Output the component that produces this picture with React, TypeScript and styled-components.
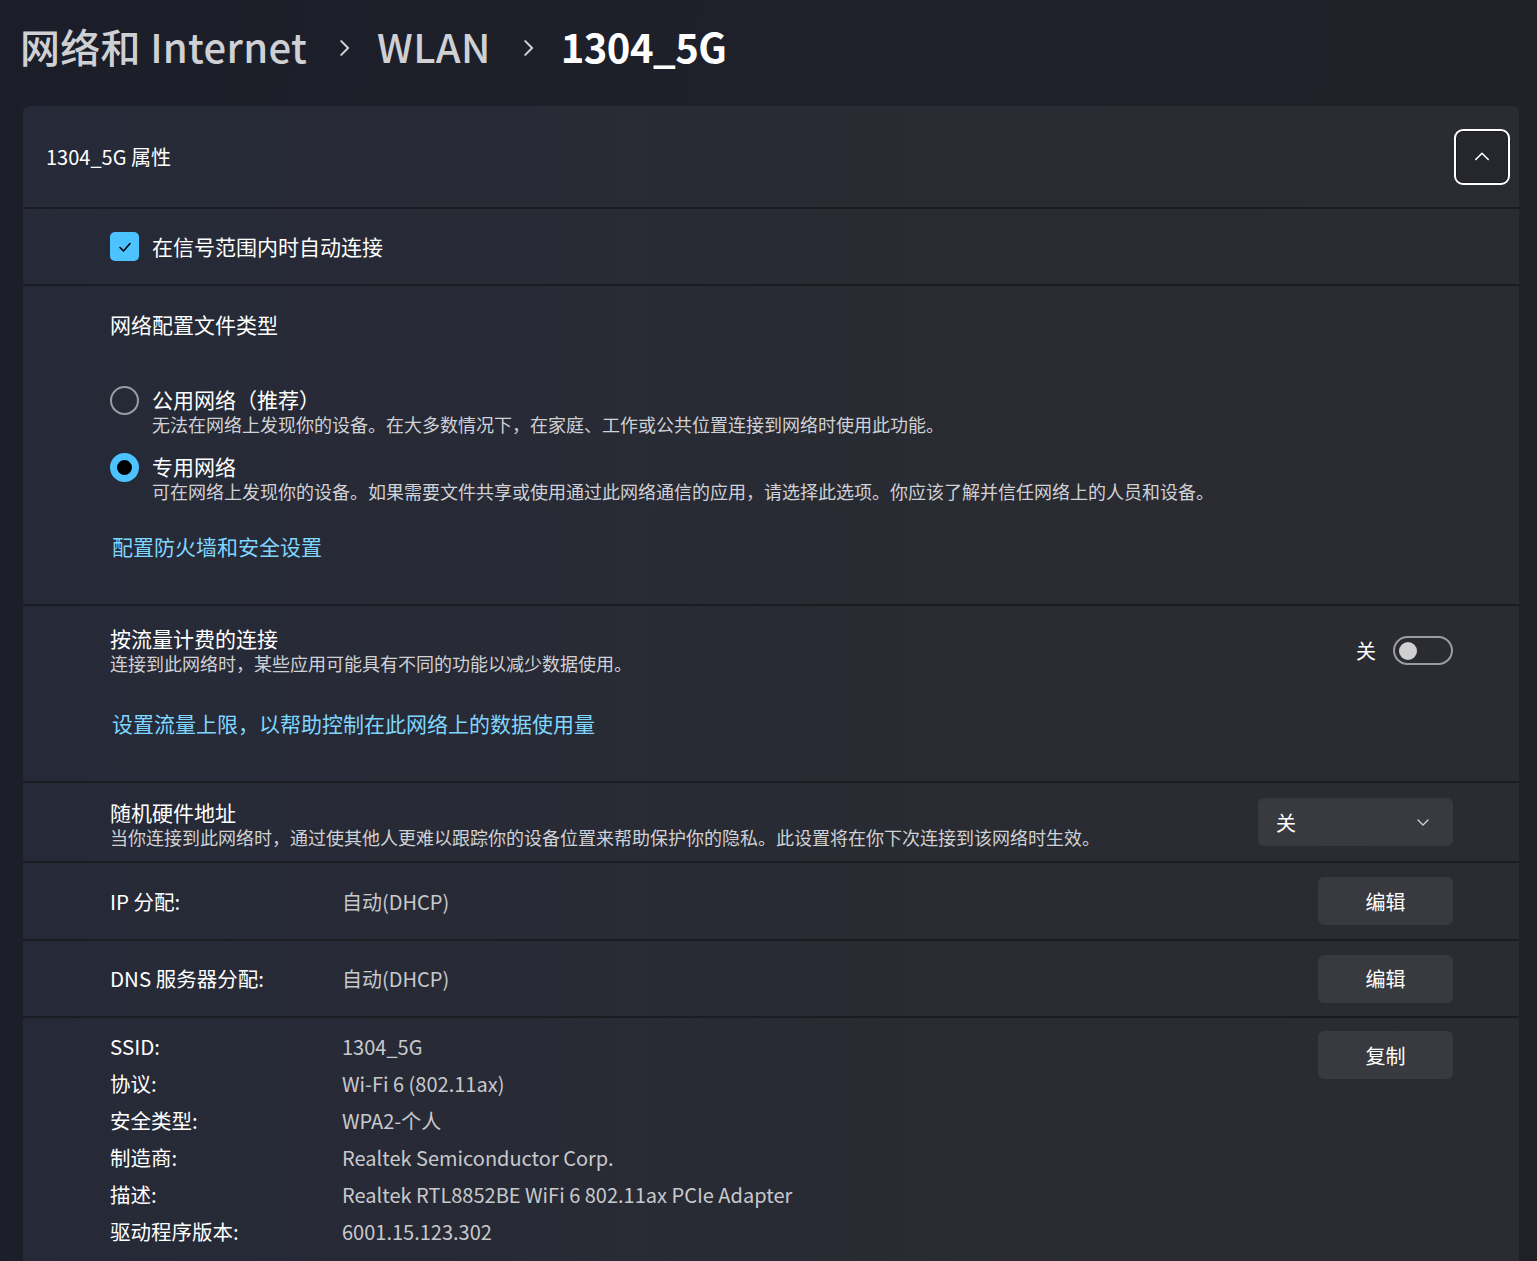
import styled, { createGlobalStyle } from "styled-components";
import { useState } from "react";

const GlobalStyle = createGlobalStyle`
  body {
    margin: 0;
    background: #1c1f28;
    font-family: "Segoe UI", "Noto Sans CJK SC", "Noto Sans", sans-serif;
    color: #ffffff;
  }
`;

const Page = styled.div`
  height: 1261px;
  overflow: hidden;
  background: linear-gradient(100deg, #1b1e28 0%, #1f222b 60%, #202127 100%);
  padding: 0 18px 0 23px;
`;

const Breadcrumb = styled.div`
  display: flex;
  align-items: center;
  height: 106px;
  margin-left: -3px;
  padding-bottom: 14px;
  box-sizing: border-box;
  font-size: 40px;
  font-weight: 600;
`;

const Crumb = styled.span<{ $current?: boolean }>`
  color: ${(p) => (p.$current ? "#ffffff" : "#cfd0d4")};
  font-weight: ${(p) => (p.$current ? 600 : 500)};
  letter-spacing: ${(p) => (p.$current ? "-0.5px" : "0.3px")};
`;

const Chevron = styled.span`
  display: inline-flex;
  margin: 4px 22px 0 26px;
  color: #cfd0d4;
`;

const Card = styled.div`
  display: flex;
  flex-direction: column;
  gap: 2px;
  border-radius: 6px 6px 0 0;
  overflow: hidden;
  background: #1a1c22;
`;

const Section = styled.div<{ $h?: number }>`
  position: relative;
  background: linear-gradient(90deg, #262a38 0%, #292b33 55%, #2b2c31 100%);
  padding: 0 66px 0 87px;
  ${(p) => (p.$h ? `height: ${p.$h}px;` : "")}
  box-sizing: border-box;
`;

const Header = styled(Section)`
  display: flex;
  align-items: center;
  justify-content: space-between;
  padding: 0 9px 0 23px;
  font-size: 20px;
`;

const ExpandButton = styled.button`
  width: 56px;
  height: 56px;
  border: 2px solid #ffffff;
  border-radius: 9px;
  background: #25272d;
  box-shadow: inset 0 0 0 1px #1a1b20;
  display: flex;
  align-items: center;
  justify-content: center;
  padding: 0;
`;

const CenterRow = styled(Section)`
  display: flex;
  align-items: center;
  justify-content: space-between;
`;

const Check = styled.span`
  width: 29px;
  height: 29px;
  border-radius: 5px;
  background: #4cc2ff;
  display: inline-flex;
  align-items: center;
  justify-content: center;
  margin-right: 13px;
`;

const Label = styled.span`
  font-size: 21px;
  line-height: 25px;
  color: #ffffff;
`;

const GroupTitle = styled.div`
  font-size: 21px;
  line-height: 25px;
  padding-top: 26px;
`;

const RadioList = styled.div`
  display: flex;
  flex-direction: column;
  gap: 18px;
  margin-top: 50px;
`;

const RadioItem = styled.div`
  display: flex;
  align-items: flex-start;
`;

const Radio = styled.span<{ $on?: boolean }>`
  width: 29px;
  height: 29px;
  border-radius: 50%;
  box-sizing: border-box;
  flex: none;
  margin-right: 13px;
  margin-top: -1px;
  ${(p) =>
    p.$on
      ? "border: 7px solid #4cc2ff; background: #000;"
      : "border: 2px solid #9b9ca1; background: transparent;"}
`;

const TextBlock = styled.div`
  display: flex;
  flex-direction: column;
`;

const Desc = styled.span`
  font-size: 18px;
  line-height: 24px;
  color: #d0d1d5;
`;

const Link = styled.a<{ $gap: number }>`
  display: block;
  font-size: 21px;
  line-height: 25px;
  color: #7fd6ff;
  margin-left: 2px;
  margin-top: ${(p) => p.$gap}px;
`;

const SplitRow = styled.div`
  display: flex;
  align-items: center;
  justify-content: space-between;
`;

const Switch = styled.div`
  display: flex;
  align-items: center;
  gap: 17px;
  font-size: 20px;
`;

const Track = styled.span`
  width: 60px;
  height: 29px;
  border-radius: 15px;
  border: 2px solid #9c9da2;
  box-sizing: border-box;
  display: flex;
  align-items: center;
  padding-left: 4px;
`;

const Knob = styled.span`
  width: 18px;
  height: 18px;
  border-radius: 50%;
  background: #d0d0d2;
`;

const Dropdown = styled.div`
  width: 195px;
  height: 48px;
  border-radius: 6px;
  background: #393a40;
  box-sizing: border-box;
  padding: 0 22px 0 18px;
  display: flex;
  align-items: center;
  justify-content: space-between;
  font-size: 20px;
`;

const Key = styled.span`
  width: 232px;
  font-size: 20.5px;
  line-height: 37px;
  color: #ffffff;
  flex: none;
`;

const Value = styled.span`
  font-size: 20px;
  line-height: 37px;
  color: #c8c9cd;
`;

const Pair = styled.div`
  display: flex;
  align-items: center;
`;

const ActionButton = styled.button<{ $top?: number }>`
  width: 135px;
  height: 48px;
  border: none;
  border-radius: 6px;
  background: #393a40;
  color: #ffffff;
  font-family: inherit;
  font-size: 20px;
  margin-top: ${(p) => p.$top ?? 0}px;
`;

const MeteredSection = styled(Section)`
  padding-top: 20px;
`;

const Details = styled(Section)`
  display: flex;
  justify-content: space-between;
  align-items: flex-start;
  padding-top: 10px;
  height: 280px;
`;

const DetailList = styled.div`
  display: flex;
  flex-direction: column;
`;

const ChevronIcon = ({ dir, size, color, sw }: { dir: "up" | "down" | "right"; size: number; color: string; sw: number }) => {
  const d = dir === "up" ? "M3 10 L8 5 L13 10" : dir === "down" ? "M3 6 L8 11 L13 6" : "M6 3 L11 8 L6 13";
  return (
    <svg width={size} height={size} viewBox="0 0 16 16" fill="none">
      <path d={d} stroke={color} strokeWidth={sw} strokeLinecap="round" strokeLinejoin="round" />
    </svg>
  );
};

const details: [string, string][] = [
  ["SSID:", "1304_5G"],
  ["协议:", "Wi-Fi 6 (802.11ax)"],
  ["安全类型:", "WPA2-个人"],
  ["制造商:", "Realtek Semiconductor Corp."],
  ["描述:", "Realtek RTL8852BE WiFi 6 802.11ax PCIe Adapter"],
  ["驱动程序版本:", "6001.15.123.302"],
];

const App = () => {
  const [auto, setAuto] = useState(true);
  const [profile, setProfile] = useState("private");

  return (
    <>
      <GlobalStyle />
      <Page>
        <Breadcrumb>
          <Crumb>网络和 Internet</Crumb>
          <Chevron>
            <ChevronIcon dir="right" size={22} color="#cfd0d4" sw={1.5} />
          </Chevron>
          <Crumb>WLAN</Crumb>
          <Chevron>
            <ChevronIcon dir="right" size={22} color="#cfd0d4" sw={1.5} />
          </Chevron>
          <Crumb $current>1304_5G</Crumb>
        </Breadcrumb>

        <Card>
          <Header $h={101}>
            <span>1304_5G 属性</span>
            <ExpandButton>
              <ChevronIcon dir="up" size={20} color="#ffffff" sw={1.3} />
            </ExpandButton>
          </Header>

          <CenterRow $h={75} onClick={() => setAuto(!auto)}>
            <Pair>
              <Check>
                {auto && (
                  <svg width="16" height="16" viewBox="0 0 16 16" fill="none">
                    <path d="M3 8.5 L6.5 12 L13 4.5" stroke="#000" strokeWidth="1.6" strokeLinecap="round" strokeLinejoin="round" />
                  </svg>
                )}
              </Check>
              <Label>在信号范围内时自动连接</Label>
            </Pair>
          </CenterRow>

          <Section $h={318}>
            <GroupTitle>网络配置文件类型</GroupTitle>
            <RadioList>
              <RadioItem onClick={() => setProfile("public")}>
                <Radio $on={profile === "public"} />
                <TextBlock>
                  <Label>公用网络（推荐）</Label>
                  <Desc>无法在网络上发现你的设备。在大多数情况下，在家庭、工作或公共位置连接到网络时使用此功能。</Desc>
                </TextBlock>
              </RadioItem>
              <RadioItem onClick={() => setProfile("private")}>
                <Radio $on={profile === "private"} />
                <TextBlock>
                  <Label>专用网络</Label>
                  <Desc>可在网络上发现你的设备。如果需要文件共享或使用通过此网络通信的应用，请选择此选项。你应该了解并信任网络上的人员和设备。</Desc>
                </TextBlock>
              </RadioItem>
            </RadioList>
            <Link $gap={31}>配置防火墙和安全设置</Link>
          </Section>

          <MeteredSection $h={175}>
            <SplitRow>
              <TextBlock>
                <Label>按流量计费的连接</Label>
                <Desc>连接到此网络时，某些应用可能具有不同的功能以减少数据使用。</Desc>
              </TextBlock>
              <Switch>
                <span>关</span>
                <Track>
                  <Knob />
                </Track>
              </Switch>
            </SplitRow>
            <Link $gap={36}>设置流量上限，以帮助控制在此网络上的数据使用量</Link>
          </MeteredSection>

          <CenterRow $h={78}>
            <TextBlock style={{ marginTop: 4 }}>
              <Label>随机硬件地址</Label>
              <Desc>当你连接到此网络时，通过使其他人更难以跟踪你的设备位置来帮助保护你的隐私。此设置将在你下次连接到该网络时生效。</Desc>
            </TextBlock>
            <Dropdown>
              <span>关</span>
              <ChevronIcon dir="down" size={16} color="#cfd0d4" sw={1.4} />
            </Dropdown>
          </CenterRow>

          <CenterRow $h={76}>
            <Pair>
              <Key>IP 分配:</Key>
              <Value>自动(DHCP)</Value>
            </Pair>
            <ActionButton>编辑</ActionButton>
          </CenterRow>

          <CenterRow $h={75}>
            <Pair>
              <Key>DNS 服务器分配:</Key>
              <Value>自动(DHCP)</Value>
            </Pair>
            <ActionButton>编辑</ActionButton>
          </CenterRow>

          <Details>
            <DetailList>
              {details.map(([k, v]) => (
                <Pair key={k}>
                  <Key>{k}</Key>
                  <Value>{v}</Value>
                </Pair>
              ))}
            </DetailList>
            <ActionButton $top={3}>复制</ActionButton>
          </Details>
        </Card>
      </Page>
    </>
  );
};

export default App;
